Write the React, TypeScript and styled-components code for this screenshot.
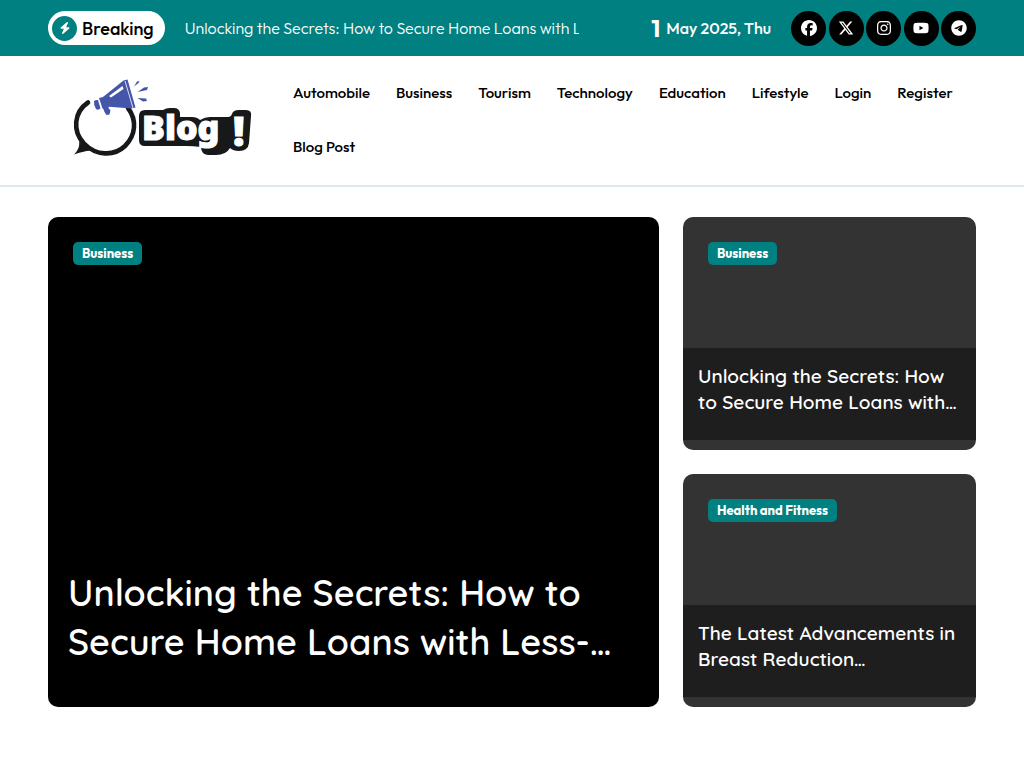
import React from "react";
import styled, { createGlobalStyle } from "styled-components";
import { FaBolt, FaFacebook, FaInstagram, FaTelegram, FaXTwitter, FaYoutube } from "react-icons/fa6";

const sans = `Outfit, Lato, "Liberation Sans", sans-serif`;
const rounded = `Quicksand, Lato, "Liberation Sans", sans-serif`;
const teal = "#008080";

const GlobalStyle = createGlobalStyle`
  *, *::before, *::after { box-sizing: border-box; }
  body { margin: 0; background: #fff; color: #000; font-family: ${sans}; font-size: 16px; }
  a { color: inherit; text-decoration: none; }
`;

const TopBar = styled.div`
  display: flex;
  align-items: center;
  height: 56px;
  padding: 0 48px;
  background: ${teal};
  color: #fff;
`;

const Breaking = styled.div`
  display: flex;
  flex: none;
  align-items: center;
  gap: 5px;
  height: 34px;
  padding: 0 11px 0 4px;
  border-radius: 17px;
  background: #fff;
  color: #000;
  font-size: 18px;
  font-weight: 500;
`;

const BoltBadge = styled.span`
  display: grid;
  place-items: center;
  width: 25px;
  height: 25px;
  border-radius: 50%;
  background: ${teal};
  color: #fff;
  font-size: 12px;
`;

const Ticker = styled.div`
  flex: 1;
  min-width: 0;
  margin: 0 72px 0 20px;
  overflow: hidden;
  white-space: nowrap;
  font-size: 16px;
  font-weight: 300;
  line-height: 24px;
`;

const DateLine = styled.div`
  display: flex;
  flex: none;
  align-items: center;
  gap: 6px;
  margin-right: 20px;
  font-weight: 500;
  line-height: 28px;
`;

const Day = styled.span`
  font-size: 24px;
  font-weight: 700;
`;

const Socials = styled.div`
  display: flex;
  flex: none;
  justify-content: space-between;
  width: 185px;
`;

const SocialLink = styled.a`
  display: grid;
  place-items: center;
  width: 35px;
  height: 35px;
  border-radius: 50%;
  background: #000;
  font-size: 16px;
`;

const Header = styled.header`
  display: flex;
  align-items: center;
  padding: 10px 48px 11px;
  border-bottom: 2px solid #dce9ec;
`;

const LogoLink = styled.a`
  flex: none;
  width: 245px;
  height: 90px;
  padding-left: 20px;
  svg { display: block; }
`;

const Nav = styled.nav`
  display: flex;
  flex: 1;
  flex-wrap: wrap;
  column-gap: 26px;
`;

const NavLink = styled.a`
  font-size: 15px;
  font-weight: 500;
  line-height: 54px;
`;

const Featured = styled.main`
  display: grid;
  grid-template-columns: minmax(0, 611fr) minmax(0, 293fr);
  gap: 24px;
  padding: 30px 48px 60px;
`;

const SideColumn = styled.div`
  display: grid;
  gap: 24px;
`;

const Card = styled.article`
  display: flex;
  flex-direction: column;
  align-items: flex-start;
  justify-content: space-between;
  overflow: hidden;
  border-radius: 10px;
  color: #fff;
`;

const LeadCard = styled(Card)`
  min-height: 490px;
  padding-bottom: 41px;
  background: #000;
`;

const SideCard = styled(Card)`
  min-height: 233px;
  padding-bottom: 10px;
  background: #333;
`;

const Category = styled.a`
  margin: 25px 25px 0;
  padding: 0 9px;
  border-radius: 5px;
  background: ${teal};
  font-size: 13px;
  font-weight: 700;
  line-height: 23px;
`;

const LeadTitle = styled.h2`
  margin: 0;
  padding: 0 20px;
  font-family: ${rounded};
  font-size: 36px;
  font-weight: 600;
  line-height: 49px;
`;

const SideTitle = styled.h3`
  width: 100%;
  margin: 0;
  padding: 15px 15px 25px;
  background: #1e1e1e;
  font-family: ${rounded};
  font-size: 19px;
  font-weight: 600;
  line-height: 26px;
`;

const BlogLogo = () => (
  <svg width="190" height="90" viewBox="0 0 190 90" role="img" aria-label="Blog!">
    <path
      d="M20 27.500C6 37 4 56 16 68.500C28 81 46 81.500 57 71C68 60 69 45 60 33"
      fill="none"
      stroke="#17181a"
      strokeWidth="4.600"
      strokeLinecap="round"
    />
    <path d="M11 66C12 71 10 75.500 6 79.500C12 77.500 17 76 23 75.500Z" fill="#17181a" />
    <g fill="#4456aa">
      <path d="M55.500 5.500L59.500 4.500L67.500 32.500L63.500 33.500L38 31.500L35 22Z" />
      <path d="M31 23L37 21.500L41 32L34.500 33.500Z" />
      <path d="M26 26Q28 24.500 30 25L32.500 33.500Q30 35.500 28 34Q25.500 30 26 26Z" />
      <path d="M34.500 32L40 31L41 34L42.500 35L41.500 39.500L38.500 40L36.500 37Z" />
      <path d="M66 11.500L69 6.500L71.500 6L70.500 8ZM69.500 17L76 12.500L80 12L79 15ZM69.500 23L78 23.500L79 26L75 26.500Z" />
    </g>
    <path d="M41 21L54.500 11L55.500 14L43 22.500Z" fill="#fff" />
    <path d="M57 6L65 33" stroke="#fff" strokeWidth="0.800" />
    <path
      d="M77 35H95Q98 33 102 33H106Q111 33 112 38V42H124Q129 42 132 45Q137 42 142 42H160Q163 42 164 39Q165 35 171 35H178Q184 35 183 41L181 68Q180 76 171 76Q165 76 162 73Q158 80 148 80H140Q133 79 133 72Q125 71 118 71H77Q71 71 71 65V41Q71 35 77 35Z"
      fill="#17181a"
    />
    <g fontFamily='"Noto Sans", sans-serif' fontWeight="900" fill="#fff" stroke="#fff">
      <text x="74" y="65" fontSize="34">Blog</text>
      <text x="165" y="71" fontSize="40">!</text>
    </g>
  </svg>
);

const navItems = ["Automobile", "Business", "Tourism", "Technology", "Education", "Lifestyle", "Login", "Register", "Blog Post"];

const socials = [
  { label: "Facebook", Icon: FaFacebook },
  { label: "X", Icon: FaXTwitter },
  { label: "Instagram", Icon: FaInstagram },
  { label: "YouTube", Icon: FaYoutube },
  { label: "Telegram", Icon: FaTelegram },
];

const sidePosts = [
  { category: "Business", lines: ["Unlocking the Secrets: How", "to Secure Home Loans with…"] },
  { category: "Health and Fitness", lines: ["The Latest Advancements in", "Breast Reduction…"] },
];

export default function App() {
  return (
    <>
      <GlobalStyle />
      <TopBar>
        <Breaking>
          <BoltBadge><FaBolt /></BoltBadge>
          Breaking
        </Breaking>
        <Ticker>
          <a href="#post">Unlocking the Secrets: How to Secure Home Loans with Less-Than-Perfect Credit</a>
        </Ticker>
        <DateLine>
          <Day>1</Day>
          <span>May 2025, Thu</span>
        </DateLine>
        <Socials>
          {socials.map(({ label, Icon }) => (
            <SocialLink key={label} href="#social" aria-label={label}><Icon /></SocialLink>
          ))}
        </Socials>
      </TopBar>
      <Header>
        <LogoLink href="#home"><BlogLogo /></LogoLink>
        <Nav>
          {navItems.map((item) => <NavLink key={item} href="#nav">{item}</NavLink>)}
        </Nav>
      </Header>
      <Featured>
        <LeadCard>
          <Category href="#category">Business</Category>
          <LeadTitle>
            <a href="#post">Unlocking the Secrets: How to<br />Secure Home Loans with Less-…</a>
          </LeadTitle>
        </LeadCard>
        <SideColumn>
          {sidePosts.map((post) => (
            <SideCard key={post.category}>
              <Category href="#category">{post.category}</Category>
              <SideTitle>
                <a href="#post">{post.lines[0]}<br />{post.lines[1]}</a>
              </SideTitle>
            </SideCard>
          ))}
        </SideColumn>
      </Featured>
    </>
  );
}
